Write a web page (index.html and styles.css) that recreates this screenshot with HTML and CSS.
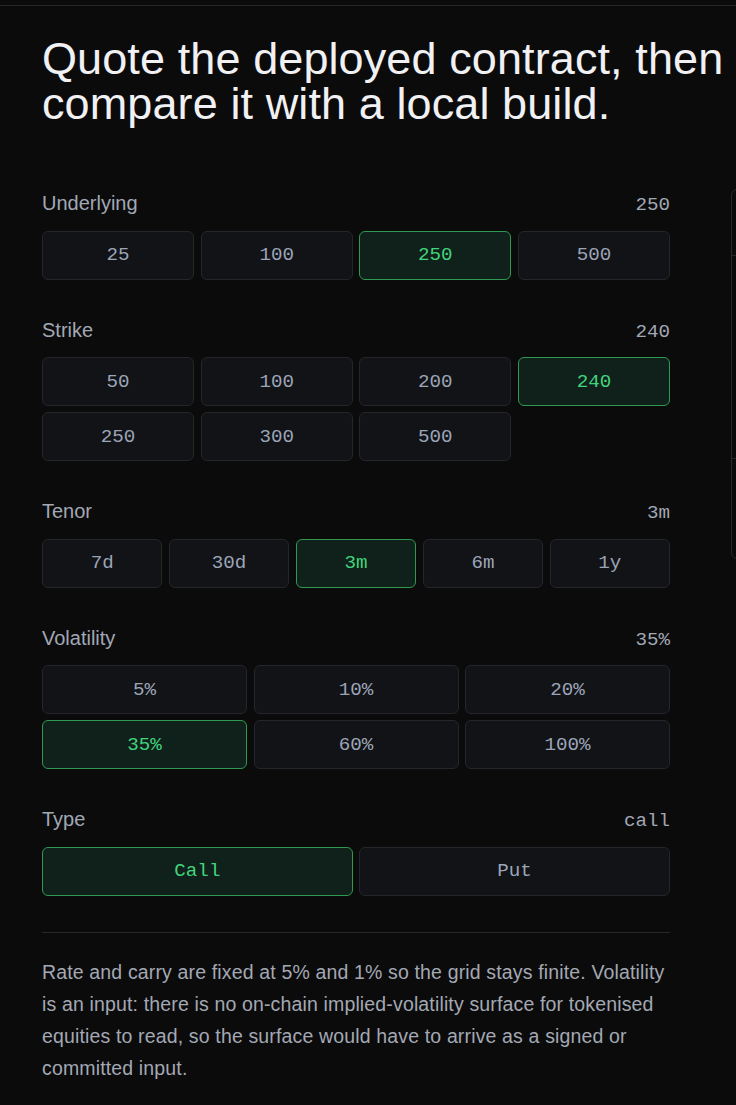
FILE: index.html
```html
<!DOCTYPE html>
<html lang="en">
<head>
<meta charset="utf-8">
<title>Quote</title>
<link rel="stylesheet" href="styles.css">
</head>
<body>
<div class="topline"></div>
<div class="layout">
  <main class="main">
    <h1 class="title">Quote the deployed contract, then compare it with a local build.</h1>

    <section class="field">
      <div class="field-head"><span class="label">Underlying</span><span class="value">250</span></div>
      <div class="opts cols-4">
        <button class="opt">25</button>
        <button class="opt">100</button>
        <button class="opt on">250</button>
        <button class="opt">500</button>
      </div>
    </section>

    <section class="field">
      <div class="field-head"><span class="label">Strike</span><span class="value">240</span></div>
      <div class="opts cols-4">
        <button class="opt">50</button>
        <button class="opt">100</button>
        <button class="opt">200</button>
        <button class="opt on">240</button>
        <button class="opt">250</button>
        <button class="opt">300</button>
        <button class="opt">500</button>
      </div>
    </section>

    <section class="field">
      <div class="field-head"><span class="label">Tenor</span><span class="value">3m</span></div>
      <div class="opts cols-5">
        <button class="opt">7d</button>
        <button class="opt">30d</button>
        <button class="opt on">3m</button>
        <button class="opt">6m</button>
        <button class="opt">1y</button>
      </div>
    </section>

    <section class="field">
      <div class="field-head"><span class="label">Volatility</span><span class="value">35%</span></div>
      <div class="opts cols-3">
        <button class="opt">5%</button>
        <button class="opt">10%</button>
        <button class="opt">20%</button>
        <button class="opt on">35%</button>
        <button class="opt">60%</button>
        <button class="opt">100%</button>
      </div>
    </section>

    <section class="field">
      <div class="field-head"><span class="label">Type</span><span class="value">call</span></div>
      <div class="opts cols-2">
        <button class="opt on">Call</button>
        <button class="opt">Put</button>
      </div>
    </section>

    <p class="note">Rate and carry are fixed at 5% and 1% so the grid stays finite. Volatility is an input: there is no on-chain implied-volatility surface for tokenised equities to read, so the surface would have to arrive as a signed or committed input.</p>
  </main>

  <aside class="panel">
    <div class="panel-row r1"></div>
    <div class="panel-row r2"></div>
    <div class="panel-row r3"></div>
  </aside>
</div>
</body>
</html>
```

FILE: styles.css
```css
* { box-sizing: border-box; }
html, body {
  margin: 0;
  padding: 0;
  background: #0b0b0c;
  overflow: hidden;
}
body {
  font-family: "Liberation Sans", Arial, sans-serif;
  color: #a3a8b3;
  width: 736px;
  height: 1105px;
}
.topline {
  height: 6px;
  border-bottom: 1px solid #27272a;
}
.layout {
  display: flex;
  gap: 61px;
  padding-left: 42px;
}
.main {
  width: 628px;
  flex-shrink: 0;
}
.title {
  margin: 30px -60px 0 0;
  font-size: 45px;
  line-height: 45px;
  font-weight: 400;
  letter-spacing: 0.1px;
  color: #f1f1f4;
}
.field { margin-top: 38px; }
.field:first-of-type { margin-top: 65px; }
.field-head {
  display: flex;
  justify-content: space-between;
  align-items: baseline;
  height: 24px;
  margin-bottom: 15.5px;
}
.label {
  font-size: 20px;
  line-height: 24px;
  color: #a2a8b4;
}
.value {
  font-family: "Liberation Mono", "DejaVu Sans Mono", monospace;
  font-size: 19.2px;
  line-height: 24px;
  color: #a2a8b4;
}
.opts {
  display: grid;
  gap: 6px 6.5px;
}
.cols-2 { grid-template-columns: repeat(2, 1fr); }
.cols-3 { grid-template-columns: repeat(3, 1fr); }
.cols-4 { grid-template-columns: repeat(4, 1fr); }
.cols-5 { grid-template-columns: repeat(5, 1fr); }
.opt {
  height: 49px;
  margin: 0;
  padding: 0;
  background: #121316;
  border: 1px solid #25262b;
  border-radius: 6px;
  color: #9ca5b8;
  font-family: "Liberation Mono", "DejaVu Sans Mono", monospace;
  font-size: 19.2px;
}
.opt.on {
  background: #10201a;
  border-color: #2f9a4f;
  color: #41d47c;
}
.note {
  margin: 36px 0 0;
  padding-top: 23px;
  border-top: 1px solid #26272b;
  font-size: 19.5px;
  line-height: 32px;
  letter-spacing: 0.15px;
  color: #a3a8b3;
}
.panel {
  flex-shrink: 0;
  width: 300px;
  margin-top: 183px;
  border: 1px solid #27282d;
  border-radius: 6px;
  align-self: flex-start;
}
.panel-row { border-top: 1px solid #27282d; }
.panel-row.r1 { border-top: 0; height: 65px; }
.panel-row.r2 { height: 203px; }
.panel-row.r3 { height: 100px; }
```
